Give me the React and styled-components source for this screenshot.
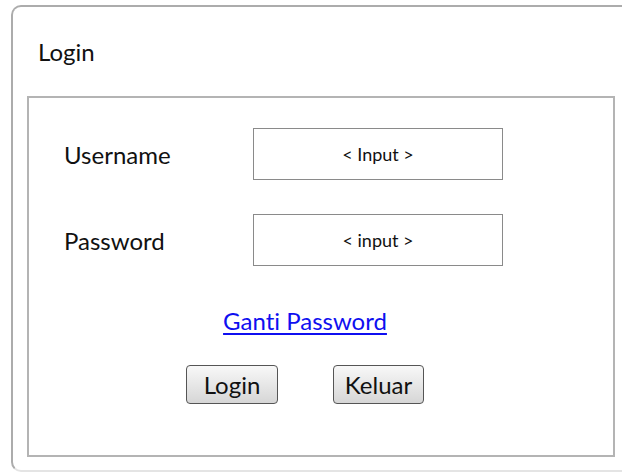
import React from 'react';
import styled, { createGlobalStyle } from 'styled-components';

const GlobalStyle = createGlobalStyle`
  html, body {
    margin: 0;
    padding: 0;
    background: #ffffff;
    overflow: hidden;
  }

  body {
    font-family: Lato, "Open Sans", "Liberation Sans", sans-serif;
    font-variant-ligatures: none;
    color: #111111;
  }
`;

const Frame = styled.div`
  box-sizing: border-box;
  margin: 5px 0 0 11px;
  width: 640px;
  height: 467px;
  border: 2px solid #acacac;
  border-bottom-color: #e4e4e4;
  border-radius: 10px;
`;

const Header = styled.div`
  height: 89px;
  padding-left: 25px;
  display: flex;
  align-items: center;
  font-size: 24px;
`;

const Panel = styled.div`
  box-sizing: border-box;
  margin-left: 14px;
  width: 588px;
  height: 361px;
  border: 2px solid #b4b4b4;
  padding: 30px 0 0 35px;
`;

const Body = styled.div`
  width: 482px;
  display: flex;
  flex-direction: column;
  align-items: center;
`;

const FormGrid = styled.div`
  align-self: stretch;
  display: grid;
  grid-template-columns: 189px 250px;
  grid-auto-rows: 52px;
  row-gap: 34px;
`;

const Label = styled.div`
  display: flex;
  align-items: center;
  font-size: 24px;
`;

const InputBox = styled.div`
  box-sizing: border-box;
  border: 1px solid #8a8a8a;
  display: flex;
  align-items: center;
  justify-content: center;
  font-size: 18px;
`;

const Link = styled.a`
  margin-top: 42px;
  font-size: 24px;
  line-height: 26px;
  color: #0f0ff0;
  text-decoration: underline;
  text-underline-offset: 3px;
  cursor: pointer;
`;

const ButtonRow = styled.div`
  margin-top: 31px;
  display: flex;
  gap: 55px;
`;

const Button = styled.button`
  box-sizing: border-box;
  width: ${p => p.$w}px;
  height: 39px;
  border: 1.5px solid #555555;
  border-radius: 4px;
  background: linear-gradient(#f8f8f8, #d6d6d6);
  font-family: inherit;
  font-size: 24px;
  color: #111111;
  padding: 0;
`;

export default function App() {
  return (
    <>
      <GlobalStyle />
      <Frame>
        <Header>Login</Header>
        <Panel>
          <Body>
            <FormGrid>
              <Label>Username</Label>
              <InputBox>&lt; Input &gt;</InputBox>
              <Label>Password</Label>
              <InputBox>&lt; input &gt;</InputBox>
            </FormGrid>
            <Link>Ganti Password</Link>
            <ButtonRow>
              <Button $w={92}>Login</Button>
              <Button $w={91}>Keluar</Button>
            </ButtonRow>
          </Body>
        </Panel>
      </Frame>
    </>
  );
}
